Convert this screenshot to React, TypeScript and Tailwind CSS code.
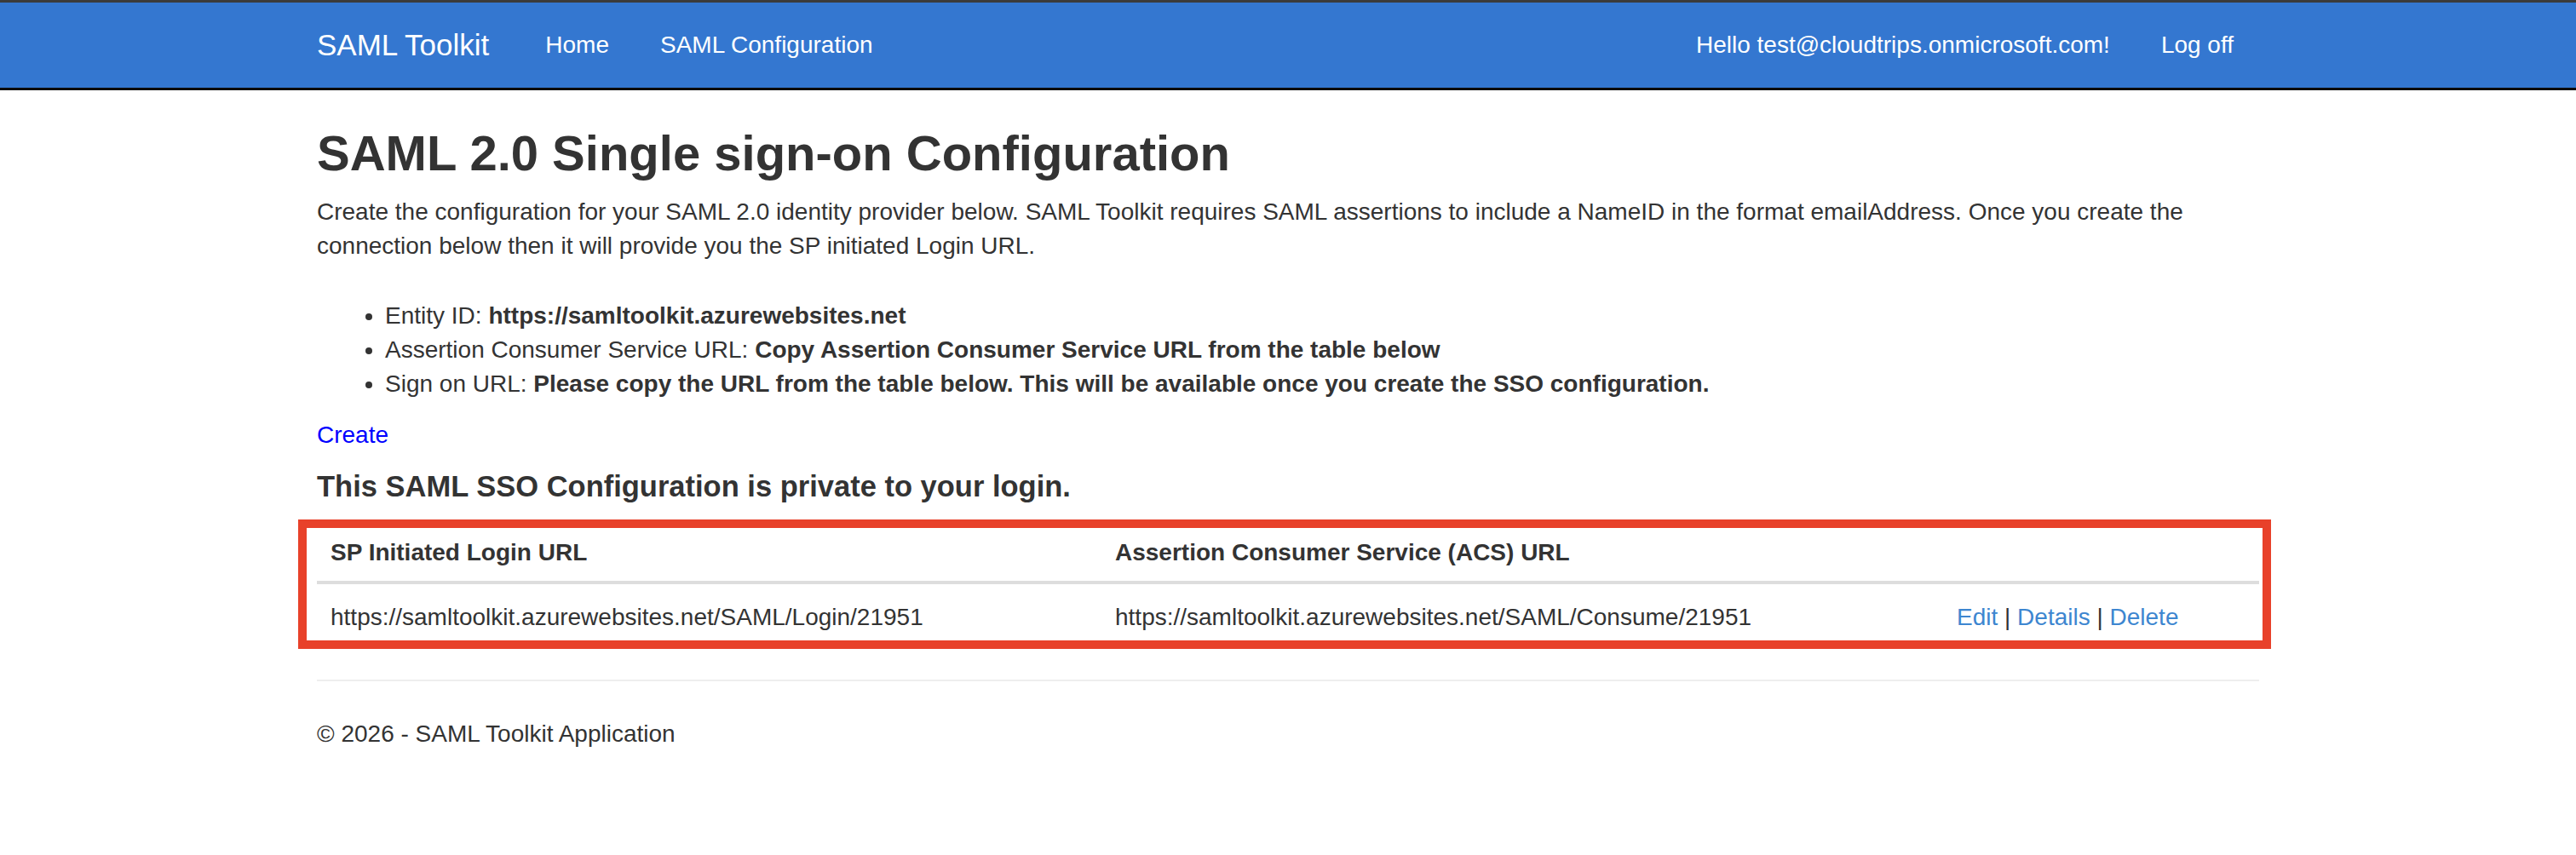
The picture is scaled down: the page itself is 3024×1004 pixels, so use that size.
import React from 'react';

const navLinks = ['Home', 'SAML Configuration'];

const bullets = [
  { label: 'Entity ID:', value: 'https://samltoolkit.azurewebsites.net' },
  { label: 'Assertion Consumer Service URL:', value: 'Copy Assertion Consumer Service URL from the table below' },
  {
    label: 'Sign on URL:',
    value: 'Please copy the URL from the table below. This will be available once you create the SSO configuration.',
  },
];

const configs = [
  {
    login: 'https://samltoolkit.azurewebsites.net/SAML/Login/21951',
    acs: 'https://samltoolkit.azurewebsites.net/SAML/Consume/21951',
  },
];

function Navbar() {
  return (
    <div>
      <div className="h-[3px] bg-[#3b3b3b]" />
      <nav className="h-[103px] bg-[#3477d0] border-b-[3px] border-[#0b0b0b] text-white">
        <div className="w-[2340px] mx-auto px-[30px] h-full flex items-center">
          <a href="#" className="text-[35px] pr-[36px]">
            SAML Toolkit
          </a>
          {navLinks.map((l) => (
            <a key={l} href="#" className="px-[30px] text-[28px]">
              {l}
            </a>
          ))}
          <div className="ml-auto flex items-center text-[28px]">
            <span className="px-[30px]">Hello test@cloudtrips.onmicrosoft.com!</span>
            <a href="#" className="px-[30px]">
              Log off
            </a>
          </div>
        </div>
      </nav>
    </div>
  );
}

export default function App() {
  return (
    <div
      className="min-h-screen bg-white text-[#333] text-[28px] leading-[40px]"
      style={{ fontFamily: '"Liberation Sans", Arial, sans-serif' }}
    >
      <Navbar />

      <div className="w-[2340px] mx-auto px-[30px]">
        <h2 className="mt-[42px] text-[58px] leading-[64px] font-bold">
          SAML 2.0 Single sign-on Configuration
        </h2>
        <p className="mt-[17px]">
          Create the configuration for your SAML 2.0 identity provider below. SAML Toolkit requires SAML
          assertions to include a NameID in the format emailAddress. Once you create the connection below then
          it will provide you the SP initiated Login URL.
        </p>

        <ul className="mt-[42px] pl-[80px] list-disc">
          {bullets.map((b) => (
            <li key={b.label}>
              {b.label} <b>{b.value}</b>
            </li>
          ))}
        </ul>

        <a href="#" className="block mt-[20px] text-[#0000ff] w-fit">
          Create
        </a>

        <h3 className="mt-[19px] text-[34.5px] leading-[42px] font-bold">
          This SAML SSO Configuration is private to your login.
        </h3>

        {/* highlighted table */}
        <div className="mt-[18px] -ml-[22px] -mr-[14px] border-[10px] border-[#e8412a] pl-[12px] pr-[4px]">
          <table className="w-full border-collapse text-left">
            <thead>
              <tr className="border-b-[4px] border-[#dddddd]">
                <th className="w-[921px] px-[16px] pt-[9px] pb-[13px] font-bold">SP Initiated Login URL</th>
                <th className="w-[988px] px-[16px] pt-[9px] pb-[13px] font-bold">
                  Assertion Consumer Service (ACS) URL
                </th>
                <th className="px-[16px] pt-[9px] pb-[13px]" />
              </tr>
            </thead>
            <tbody>
              {configs.map((c) => (
                <tr key={c.login}>
                  <td className="px-[16px] pt-[19px] pb-[7px]">{c.login}</td>
                  <td className="px-[16px] pt-[19px] pb-[7px]">{c.acs}</td>
                  <td className="px-[16px] pt-[19px] pb-[7px]">
                    <a href="#" className="text-[#3d86d0]">Edit</a> |{' '}
                    <a href="#" className="text-[#3d86d0]">Details</a> |{' '}
                    <a href="#" className="text-[#3d86d0]">Delete</a>
                  </td>
                </tr>
              ))}
            </tbody>
          </table>
        </div>

        <hr className="mt-[36px] border-t-[2px] border-[#eeeeee]" />
        <footer className="pt-[42px] pb-[40px]">
          <p>© 2026 - SAML Toolkit Application</p>
        </footer>
      </div>
    </div>
  );
}
